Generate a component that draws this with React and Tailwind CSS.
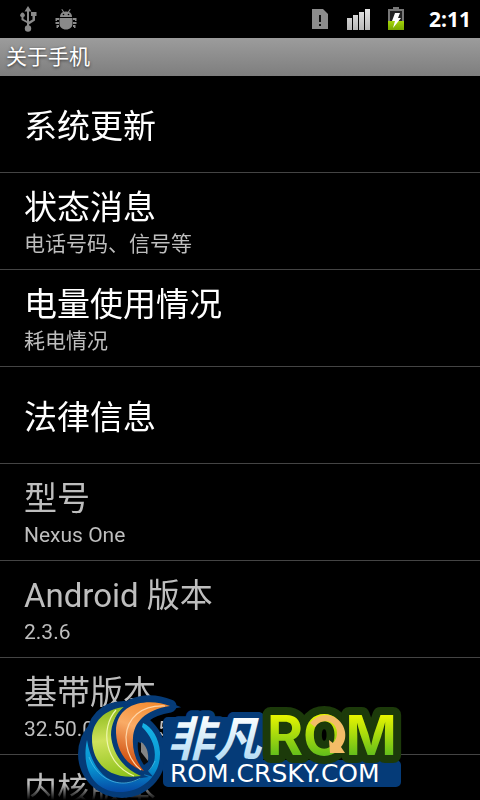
import React from "react";

const rows = [
  { title: "系统更新", enabled: true },
  { title: "状态消息", summary: "电话号码、信号等", enabled: true },
  { title: "电量使用情况", summary: "耗电情况", enabled: true },
  { title: "法律信息", enabled: true },
  { title: "型号", summary: "Nexus One" },
  { title: "Android 版本", summary: "2.3.6" },
  { title: "基带版本", summary: "32.50.00.32U_5.12.00.08" },
  { title: "内核版本", summary: "\u00a0" },
];

function UsbIcon() {
  return (
    <svg className="h-[26px] w-[18px]" viewBox="0 0 18 26" fill="#8a8a8a" aria-hidden="true">
      <path d="M9 0l3.500 5.500H10v10l3.500-2V10H12V6h5.500v4H16v4.500l-6 4V20H8v-3l-5.500-3v-3a2.200 2.200 0 1 1 2 0v2L8 15V5.500H5.500z" />
      <circle cx="9" cy="22.500" r="3.200" />
    </svg>
  );
}

function DebugIcon() {
  return (
    <svg className="h-[21px] w-[22px]" viewBox="0 0 22 21" fill="#8a8a8a" aria-hidden="true">
      <path d="M5 8c0-2.300 1-3.900 3-4.900L6.300.6l.9-.6 1.900 2.700a6 6 0 0 1 3.800 0L14.800 0l.9.6L14 3.100c2 1 3 2.600 3 4.900z" />
      <circle cx="8.500" cy="5.500" r=".8" fill="#000" />
      <circle cx="13.500" cy="5.500" r=".8" fill="#000" />
      <path d="M4.500 9h13v5.500c0 3.500-2.500 6-6.500 6s-6.500-2.500-6.500-6z" />
      <path d="M.5 9H4v2H2v1H.5zM.5 13H4v2H.5zM1.500 16H4v2H3v1H1.500zM21.500 9H18v2h2v1h1.500zM21.500 13H18v2h3.500zM20.500 16H18v2h1v1h1.500z" />
    </svg>
  );
}

function SimIcon() {
  return (
    <svg className="h-5 w-4" viewBox="0 0 16 20" aria-hidden="true">
      <path d="M0 0h11l5 5v15H0z" fill="#8c8c8c" />
      <path d="M7 6h2v7H7zM7 15h2v2H7z" fill="#111" />
    </svg>
  );
}

function SignalIcon() {
  return (
    <svg className="h-[22px] w-6" viewBox="0 0 24 22" aria-hidden="true">
      <linearGradient id="bars" x2="0" y2="1">
        <stop stopColor="#e4e4e4" />
        <stop offset="1" stopColor="#b8b8b8" />
      </linearGradient>
      <path d="M0 10h5v12H0zM6 7h5v15H6zM12 4h5v18h-5zM18 1h5v21h-5z" fill="url(#bars)" />
    </svg>
  );
}

function BatteryIcon() {
  return (
    <svg className="h-6 w-[18px]" viewBox="0 0 18 24" aria-hidden="true">
      <linearGradient id="charge" x2="0" y2="1">
        <stop stopColor="#a4d40a" />
        <stop offset="1" stopColor="#78a800" />
      </linearGradient>
      <path d="M6 0h6v2h5v12H1V2h5z" fill="#777" />
      <path d="M3 4h12v10H3z" fill="#222" />
      <path d="M1 14h16v9H1z" fill="url(#charge)" />
      <path d="M8 6h5l-2 5h3L6 21l2-7H5z" fill="#fff" />
    </svg>
  );
}

function StatusBar() {
  return (
    <header className="flex h-[38px] shrink-0 items-center justify-between bg-black pl-[19px] pr-[9px]">
      <div className="flex items-center gap-[18px]">
        <UsbIcon />
        <DebugIcon />
      </div>
      <div className="flex items-center">
        <SimIcon />
        <div className="ml-[19px]"><SignalIcon /></div>
        <div className="ml-4"><BatteryIcon /></div>
        <time className="ml-6 font-['Open_Sans',sans-serif] text-[21px] leading-6 font-bold text-white">2:11</time>
      </div>
    </header>
  );
}

function Row({ row }) {
  return (
    <li className={"flex h-[97px] shrink-0 flex-col justify-center border-b border-[#444] px-6 pt-[6px] " + (row.enabled ? "text-white" : "text-[#bebebe]")}>
      <h2 className="text-[33px] leading-10">{row.title}</h2>
      {row.summary && <p className="text-[21px] leading-8 text-[#bebebe]">{row.summary}</p>}
    </li>
  );
}

function Watermark() {
  return (
    <svg className="absolute bottom-0 left-1/2 h-[110px] w-[340px] -translate-x-1/2" viewBox="70 690 340 110" role="img" aria-label="非凡ROM ROM.CRSKY.COM">
      <defs>
        <linearGradient id="lime" gradientUnits="userSpaceOnUse" x1="0" y1="715" x2="0" y2="757">
          <stop stopColor="#e8f500" />
          <stop offset="1" stopColor="#5dbb1c" />
        </linearGradient>
        <linearGradient id="ice" gradientUnits="userSpaceOnUse" x1="0" y1="715" x2="0" y2="760">
          <stop stopColor="#fff" />
          <stop offset="1" stopColor="#b4dcf5" />
        </linearGradient>
        <linearGradient id="flame" x1=".8" y1="0" x2=".5" y2="1">
          <stop stopColor="#f58a2c" />
          <stop offset=".45" stopColor="#f9ab66" />
          <stop offset="1" stopColor="#cc4a0a" />
        </linearGradient>
        <linearGradient id="leaf" x1=".5" y1="0" x2=".6" y2="1">
          <stop stopColor="#8cba1c" />
          <stop offset=".45" stopColor="#cfe35c" />
          <stop offset="1" stopColor="#8fc21c" />
        </linearGradient>
        <linearGradient id="sea" x2="0" y2="1">
          <stop stopColor="#16b4e6" />
          <stop offset=".65" stopColor="#0792d0" />
          <stop offset="1" stopColor="#0648a4" />
        </linearGradient>
      </defs>

      {/* navy backing plate */}
      <g fill="#053b78" stroke="#053b78" strokeLinejoin="round">
        <circle cx="122" cy="754" r="44" stroke="none" />
        <path d="M124 707C105 707 92 720 92 740L116 735Z" strokeWidth="12" />
        <path d="M170 706C150 698 127 701 118 720L116 738L133 738C134 722 145 710 170 706Z" strokeWidth="13" />
        <rect x="168" y="722" width="90" height="50" strokeWidth="10" />
        <rect x="168" y="765" width="228" height="17" strokeWidth="10" />
      </g>

      {/* swirl */}
      <path d="M138 742C145 744 149 752 148 762L144 765C139 758 137 750 138 742Z" fill="#0a0a0a" />
      <path d="M141 742C146 745 149 752 148 761L141 752Z" fill="#858585" />
      <path d="M87 740C81 768 93 790 117 792C144 793 161 774 160 752C159 738 152 727 143 723L142 727C152 737 157 749 154 762C149 776 137 783 124 783C105 783 91 766 87 740Z" fill="url(#sea)" />
      <path d="M89 757C102 791 141 791 155 761" fill="none" stroke="#5fd0f2" strokeWidth="1" opacity=".6" />
      <path d="M124 707C105 709 92 722 92 739C92 760 106 781 141 776C123 769 112 752 111 735C111 724 116 714 124 707Z" fill="url(#leaf)" stroke="#053b78" strokeWidth="4" paintOrder="stroke" />
      <path d="M116 710C100 728 104 763 134 776" fill="none" stroke="#eff7ad" strokeWidth="1.200" />
      <path d="M170 706C150 698 115 701 116 733C117 752 127 766 144 771C136 762 132 750 133 738C134 722 145 710 170 706Z" fill="url(#flame)" stroke="#053b78" strokeWidth="6" paintOrder="stroke" />
      <path d="M165 706C141 705 127 718 126 737C126 751 131 762 141 770" fill="none" stroke="#ffd5a8" strokeWidth="1.200" />

      <text x="167" y="756" fontFamily="Noto Sans CJK SC, sans-serif" fontSize="47" fontWeight="700" fontStyle="italic" fill="url(#ice)" stroke="#053b78" strokeWidth="12" strokeLinejoin="round" paintOrder="stroke">非凡</text>

      <text x="267" y="755" fontFamily="Inter, sans-serif" fontSize="55" fontWeight="700" fill="url(#lime)" stroke="#1c3a0a" strokeWidth="16" strokeLinejoin="round" paintOrder="stroke">ROM</text>
      <path d="M310 723Q319 712 332 716C346 722 349 738 341 747L345 753L330 753L329 740L333 743C339 737 338 727 332 723C326 719 319 721 315 727Z" fill="#f4bd67" />

      <text x="170" y="782" fontFamily="DejaVu Sans, sans-serif" fontSize="25" fill="#fff">ROM.CRSKY.COM</text>
    </svg>
  );
}

export default function App() {
  return (
    <div className="relative flex h-screen flex-col overflow-hidden bg-black font-['Roboto','Noto_Sans_CJK_SC',sans-serif]">
      <StatusBar />
      <h1 className="flex h-[38px] shrink-0 items-center bg-linear-to-b from-[#9c9c9c] to-[#7e7e7e] px-[6px] text-[21px] leading-8 text-white text-shadow-[0_1px_3px_#333]">
        关于手机
      </h1>
      <ul className="flex min-h-0 flex-1 flex-col overflow-hidden mask-b-from-[calc(100%-16px)]">
        {rows.map((row) => <Row key={row.title} row={row} />)}
      </ul>
      <Watermark />
    </div>
  );
}
